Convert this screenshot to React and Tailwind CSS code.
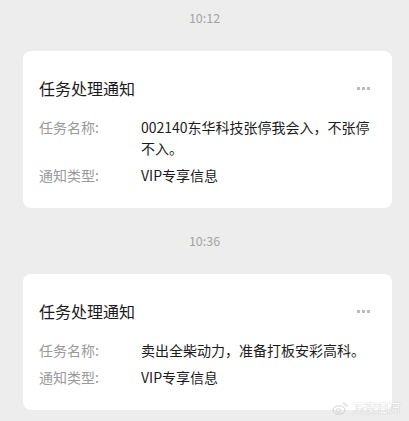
import React from "react";

const font = { fontFamily: '"Microsoft YaHei", "Noto Sans CJK SC", "Noto Sans", sans-serif' };

function Card({ name, type }) {
  return (
    <div className="ml-[23px] mr-[17px] rounded-[8px] bg-white pl-4 pr-4 pt-[26px] pb-[22px]">
      <div className="flex items-center justify-between">
        <div className="text-[16px] leading-[22px] text-[#1b1b1b]">任务处理通知</div>
        <div className="mr-[6px] flex gap-[2px]">
          <span className="h-[3px] w-[3px] bg-[#bdbdbd]" />
          <span className="h-[3px] w-[3px] bg-[#bdbdbd]" />
          <span className="h-[3px] w-[3px] bg-[#bdbdbd]" />
        </div>
      </div>
      <div className="mt-[18px] flex flex-col gap-[6px] text-[14px] leading-[21px]">
        <div className="flex">
          <div className="w-[102px] shrink-0 text-[#9a9a9a]">任务名称:</div>
          <div className="flex-1 text-[#1b1b1b]">{name}</div>
        </div>
        <div className="flex">
          <div className="w-[102px] shrink-0 text-[#9a9a9a]">通知类型:</div>
          <div className="flex-1 text-[#1b1b1b]">{type}</div>
        </div>
      </div>
    </div>
  );
}

function Time({ t }) {
  return (
    <div className="my-[25px] text-center text-[12.5px] leading-[16px] text-[#a3a3a3]">{t}</div>
  );
}

export default function App() {
  return (
    <div className="relative h-[421px] w-[409px] overflow-hidden bg-[#ededed] pt-[10px]" style={font}>
      <div className="mb-[25px] text-center text-[12.5px] leading-[16px] text-[#a3a3a3]">10:12</div>
      <Card name="002140东华科技张停我会入，不张停不入。" type="VIP专享信息" />
      <Time t="10:36" />
      <Card name="卖出全柴动力，准备打板安彩高科。" type="VIP专享信息" />
      <div className="absolute bottom-[6px] right-[8px] flex items-center gap-[5px] opacity-80">
        <svg width="16" height="13" viewBox="0 0 16 13">
          <ellipse cx="7" cy="8" rx="6" ry="4.2" fill="none" stroke="#c8c8c8" strokeWidth="1" />
          <ellipse cx="6.5" cy="8.5" rx="2.5" ry="1.8" fill="none" stroke="#c8c8c8" strokeWidth="0.8" />
          <path d="M11 2 a3 3 0 0 1 3 3" fill="none" stroke="#d0d0d0" strokeWidth="1" />
          <path d="M11 0.5 a4.5 4.5 0 0 1 4.5 4.5" fill="none" stroke="#d0d0d0" strokeWidth="0.8" />
        </svg>
        <span
          className="text-[12px] leading-[14px] text-white"
          style={{ textShadow: "0 0 1px #b5b5b5, 0 0 1px #b5b5b5" }}
        >
          万安日万
        </span>
      </div>
    </div>
  );
}
